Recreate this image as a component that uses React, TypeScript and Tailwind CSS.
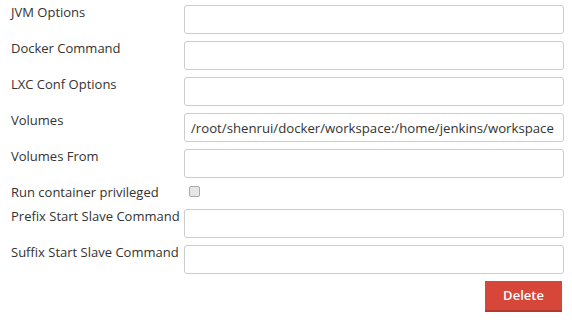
import { useState } from 'react'

const FIELDS_TOP = ['JVM Options', 'Docker Command', 'LXC Conf Options', 'Volumes', 'Volumes From']
const FIELDS_BOTTOM = ['Prefix Start Slave Command', 'Suffix Start Slave Command']

const VALUES: Record<string, string> = {
  Volumes: '/root/shenrui/docker/workspace:/home/jenkins/workspace',
}

function Field({ label }: { label: string }) {
  const [value, setValue] = useState(VALUES[label] || '')
  return (
    <div className="flex items-start">
      <label className="w-[173px] shrink-0 text-[13px] leading-[14px] text-[#333]">{label}</label>
      <input
        value={value}
        onChange={e => setValue(e.target.value)}
        className="w-[380px] h-[29px] border border-[#ccc] rounded-[3px] px-[6px] text-[13.2px] text-[#333] bg-white outline-none"
      />
    </div>
  )
}

export default function App() {
  return (
    <div className="w-[572px] h-[326px] bg-white pl-[11px] pt-[5px] font-['Open_Sans',sans-serif]">
      <div className="flex flex-col gap-[7px]">
        {FIELDS_TOP.map(f => (
          <Field key={f} label={f} />
        ))}
        <div className="flex items-start h-[17px]">
          <label className="w-[173px] shrink-0 text-[13px] leading-[14px] text-[#333]">Run container privileged</label>
          <input type="checkbox" className="ml-[5px] mt-[1px] w-[11px] h-[11px] appearance-none border border-[#aaa] rounded-[2px] bg-[#e6e6e6]" />
        </div>
        {FIELDS_BOTTOM.map(f => (
          <Field key={f} label={f} />
        ))}
      </div>
      <div className="flex justify-end w-[551px] mt-[7px]">
        <button className="w-[77px] h-[31px] bg-[#d6473a] border-b-2 border-[#b33a2f] text-white text-[13px] font-semibold">
          Delete
        </button>
      </div>
    </div>
  )
}
